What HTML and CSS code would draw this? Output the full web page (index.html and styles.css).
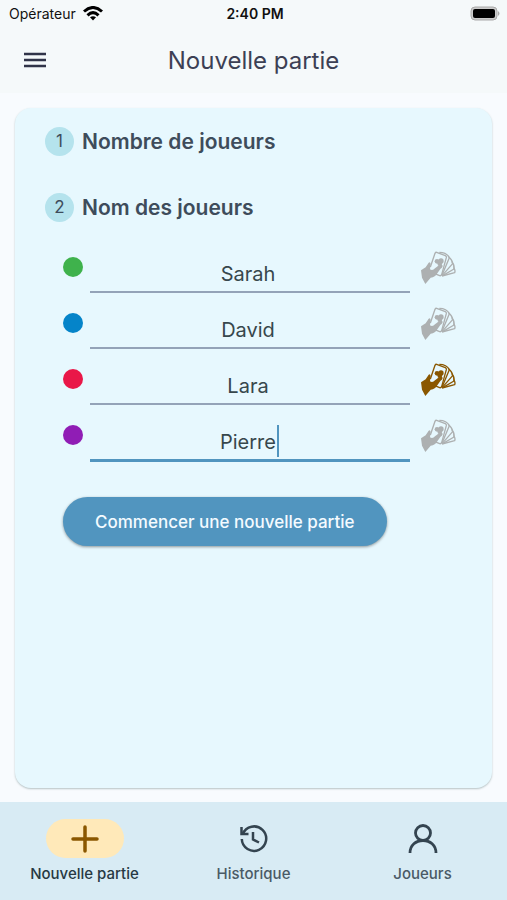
FILE: index.html
```html
<!DOCTYPE html>
<html lang="fr">
<head>
    <meta charset="UTF-8">
    <meta name="viewport" content="width=device-width, initial-scale=1.0">
    <title>Nouvelle partie</title>
    <link rel="stylesheet" href="styles.css">
</head>
<body>
    <!-- Icône du donneur, partagée par toutes les lignes -->
    <svg class="sprite" aria-hidden="true">
        <symbol id="donneur" viewBox="0 0 108 102">
            <g fill="none" stroke="currentColor" stroke-width="4" stroke-linejoin="round">
                <path d="M58 4 Q80 4 88 20 L66 73"/>
                <path d="M86 18 Q97 26 98 38 L67 73"/>
                <path d="M96 34 Q104 42 102 54 L68 74"/>
                <path d="M101 50 Q107 58 104 65 L66 75"/>
                <path d="M50 4 L76 14 Q80 16 79 20 L65 71 Q63 75 59 74 L44 68 M31 48 L45 7 Q47 3 50 4"/>
            </g>
            <g fill="currentColor">
                <circle cx="51" cy="31" r="7"/>
                <circle cx="63" cy="30" r="8"/>
                <path d="M50 30 H68 L65 44 H54Z"/>
                <path d="M3 58 L17 49 L26 35 Q31 32 32 39 L30 55 Q38 60 45 52 L58 42 Q67 39 68 45 Q68 49 61 54 L52 67 Q46 79 32 80 L16 99 L6 80Z"/>
            </g>
        </symbol>
    </svg>

    <header>
        <div class="status">
            <div class="operateur">
                <span>Opérateur</span>
                <svg width="20" height="15" viewBox="0 0 20 15" aria-hidden="true">
                    <g fill="none" stroke="#000" stroke-width="3">
                        <path d="M1 5.5 Q10 -2.500 19 5.5"/>
                        <path d="M4.500 9.300 Q10 4 15.500 9.300"/>
                    </g>
                    <path d="M7 11.300 Q10 9 13 11.300 L10 14.500Z"/>
                </svg>
            </div>
            <span class="heure">2:40 PM</span>
            <svg class="batterie" width="31" height="15" viewBox="0 0 31 15" aria-hidden="true">
                <rect x="1" y="1" width="26" height="13" rx="4" fill="#ccc" stroke="#aaa"/>
                <rect x="3" y="3" width="22" height="9" rx="2" fill="#000"/>
                <path d="M28 5 Q31 7.5 28 10Z" fill="#aaa"/>
            </svg>
        </div>
        <div class="barre">
            <button type="button" class="menu" aria-label="Menu">
                <svg width="24" height="16" viewBox="0 0 24 16" aria-hidden="true">
                    <path d="M1 2H23M1 8H23M1 14H23" stroke="#303448" stroke-width="2.5"/>
                </svg>
            </button>
            <h1>Nouvelle partie</h1>
        </div>
    </header>

    <main>
        <form class="carte">
            <h2><span class="numero">1</span>Nombre de joueurs</h2>
            <h2><span class="numero">2</span>Nom des joueurs</h2>

            <div class="joueurs">
                <div class="joueur">
                    <span class="pastille vert"></span>
                    <div class="champ"><input type="text" aria-label="Joueur 1" value="Sarah"></div>
                    <button type="button" class="donneur" aria-label="Sarah distribue"><svg width="36" height="34"><use href="#donneur"/></svg></button>
                </div>
                <div class="joueur">
                    <span class="pastille bleu"></span>
                    <div class="champ"><input type="text" aria-label="Joueur 2" value="David"></div>
                    <button type="button" class="donneur" aria-label="David distribue"><svg width="36" height="34"><use href="#donneur"/></svg></button>
                </div>
                <div class="joueur">
                    <span class="pastille rouge"></span>
                    <div class="champ"><input type="text" aria-label="Joueur 3" value="Lara"></div>
                    <button type="button" class="donneur choisi" aria-label="Lara distribue"><svg width="36" height="34"><use href="#donneur"/></svg></button>
                </div>
                <div class="joueur">
                    <span class="pastille violet"></span>
                    <div class="champ actif"><input type="text" aria-label="Joueur 4" value="Pierre"><span class="curseur"></span></div>
                    <button type="button" class="donneur" aria-label="Pierre distribue"><svg width="36" height="34"><use href="#donneur"/></svg></button>
                </div>
            </div>

            <button type="submit" class="commencer">Commencer une nouvelle partie</button>
        </form>
    </main>

    <nav>
        <a href="#" class="actif">
            <span class="icone">
                <svg width="28" height="28" viewBox="0 0 28 28" aria-hidden="true">
                    <path d="M14 2V26M2 14H26" stroke="#8a5700" stroke-width="3.5" stroke-linecap="round"/>
                </svg>
            </span>
            Nouvelle partie
        </a>
        <a href="#">
            <span class="icone">
                <svg width="30" height="30" viewBox="0 0 30 30" fill="none" stroke="#344450" stroke-width="2.5" aria-hidden="true">
                    <path d="M2.800 15 A12.200 12.200 0 1 0 3.700 10"/>
                    <path d="M2.500 3V10H9.500"/>
                    <path d="M14 8V15.500L20 18.500"/>
                </svg>
            </span>
            Historique
        </a>
        <a href="#">
            <span class="icone">
                <svg width="30" height="30" viewBox="0 0 30 30" fill="none" stroke="#344450" stroke-width="2.8" aria-hidden="true">
                    <circle cx="15" cy="9" r="7.5"/>
                    <path d="M2 29 C2 21 8 16.500 15 16.500 S28 21 28 29"/>
                </svg>
            </span>
            Joueurs
        </a>
    </nav>
</body>
</html>
```
FILE: styles.css
```css
* {
    box-sizing: border-box;
}

body {
    font-family: Inter, sans-serif;
    margin: 0;
    min-height: 100vh;
    display: flex;
    flex-direction: column;
    background-color: #f8fbfe;
    color: #344450;
}

.sprite {
    display: none;
}

button {
    font-family: inherit;
    border: none;
    background: none;
    padding: 0;
    cursor: pointer;
}

svg {
    display: block;
}

header {
    background-color: #f5f9fa;
    padding-bottom: 8px;
}

.status {
    display: grid;
    grid-template-columns: 1fr auto 1fr;
    align-items: center;
    height: 27px;
    padding: 0 6px 0 9px;
    font-size: 14px;
    color: #111;
}

.operateur {
    display: flex;
    align-items: center;
    gap: 7px;
}

.heure {
    font-weight: 600;
}

.batterie {
    justify-self: end;
}

.barre {
    display: grid;
    grid-template-columns: 24px 1fr 24px;
    align-items: center;
    height: 58px;
    padding: 8px 23px 0;
}

h1 {
    margin: 0;
    text-align: center;
    font-size: 24px;
    font-weight: 400;
    color: #3c4054;
}

main {
    flex: 1;
    display: flex;
    padding: 15px 15px 14px;
}

.carte {
    flex: 1;
    padding: 15px 36px 15px 30px;
    border-radius: 16px;
    background-color: #e7f8fe;
    box-shadow: 0 1px 2px rgba(60, 90, 90, 0.35);
}

h2 {
    display: flex;
    align-items: center;
    gap: 8px;
    height: 36px;
    margin: 0 0 30px;
    font-size: 21px;
    font-weight: 600;
    color: #3e4c5b;
}

.numero {
    display: flex;
    align-items: center;
    justify-content: center;
    width: 29px;
    height: 29px;
    border-radius: 50%;
    background-color: #b5e3ed;
    font-size: 17px;
    font-weight: 400;
}

.joueurs {
    display: grid;
    gap: 8px;
    margin-top: -10px;
    padding-left: 18px;
}

.joueur {
    display: grid;
    grid-template-columns: 20px 1fr 36px;
    column-gap: 7px;
    height: 48px;
}

.pastille {
    height: 20px;
    margin-top: 12px;
    border-radius: 50%;
}

.vert {
    background-color: #3fb24c;
}

.bleu {
    background-color: #0584c9;
}

.rouge {
    background-color: #e91748;
}

.violet {
    background-color: #901db5;
}

.champ {
    position: relative;
    margin-right: 3px;
}

.champ input {
    width: 100%;
    height: 48px;
    padding: 12px 4px 0 0;
    border: none;
    border-bottom: 2px solid #94a3b8;
    outline: none;
    background: none;
    font-family: inherit;
    font-size: 20px;
    color: #37474c;
    text-align: center;
}

.champ.actif input {
    height: 49px;
    border-bottom: 3px solid #5195bf;
}

/* Curseur de saisie, juste après le nom centré */
.curseur {
    position: absolute;
    top: 12px;
    left: calc(50% + 27px);
    width: 2px;
    height: 32px;
    background-color: #5195bf;
}

.donneur {
    align-self: start;
    margin-top: 6px;
    color: #adb0b1;
}

.donneur.choisi {
    color: #8a5700;
}

.commencer {
    height: 49px;
    margin: 36px 0 0 18px;
    padding: 0 32px;
    border-radius: 25px;
    background-color: #5195bf;
    box-shadow: 0 1px 3px rgba(0, 0, 0, 0.4);
    color: #f4fbff;
    font-size: 17px;
    font-weight: 500;
}

nav {
    display: grid;
    grid-template-columns: repeat(3, 1fr);
    height: 98px;
    padding-top: 17px;
    background-color: #d8ebf4;
}

nav a {
    display: flex;
    flex-direction: column;
    align-items: center;
    gap: 6px;
    font-size: 15px;
    font-weight: 500;
    color: #4a5a66;
    text-decoration: none;
}

nav a.actif {
    color: #273943;
}

.icone {
    display: flex;
    align-items: center;
    justify-content: center;
    width: 78px;
    height: 39px;
    border-radius: 20px;
}

.actif .icone {
    background-color: #ffe9b9;
}
```
